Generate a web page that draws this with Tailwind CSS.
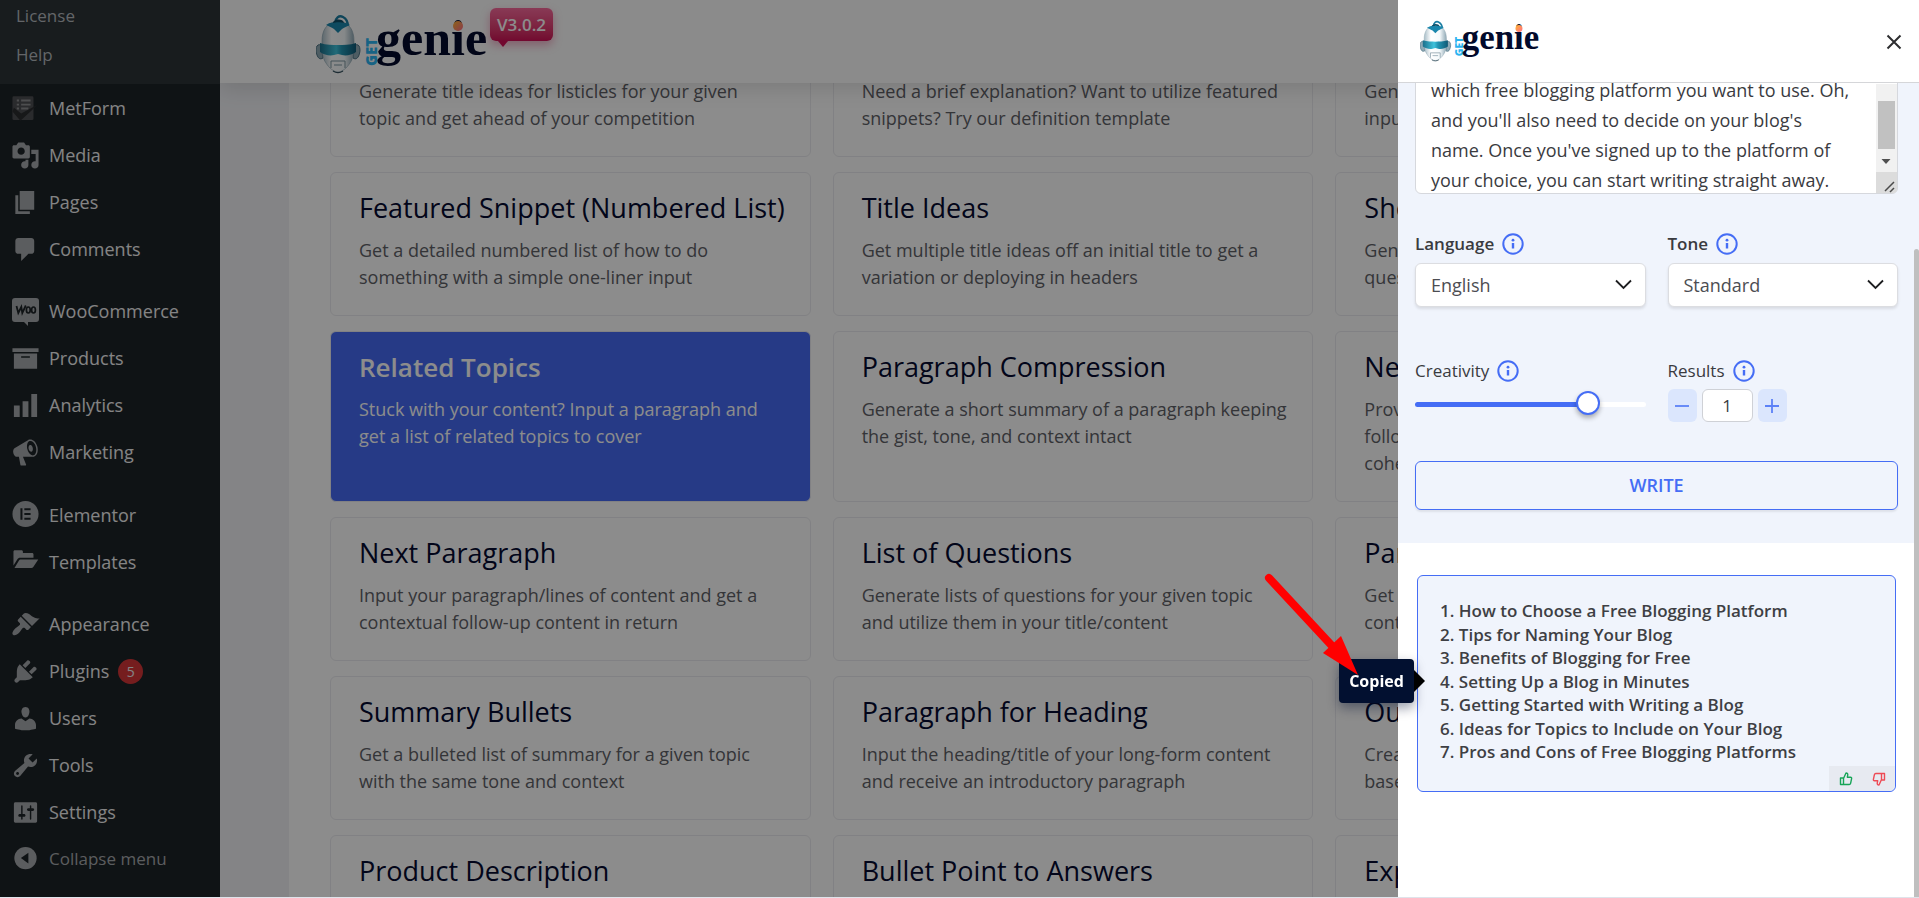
<!DOCTYPE html>
<html lang="en">
<head>
<meta charset="utf-8">
<title>GetGenie – Templates</title>
<script src="https://cdn.jsdelivr.net/npm/@tailwindcss/browser@4"></script>
</head>
<body class="h-screen overflow-hidden bg-[#f0f1f5] font-['Open_Sans','Noto_Sans',sans-serif] text-[#3c3d40]">

<svg class="absolute size-0" aria-hidden="true">
  <defs>
    <linearGradient id="steel" x1="0" x2="1" y1="0" y2="0"><stop offset="0" stop-color="#a9bec8"/><stop offset=".3" stop-color="#fff"/><stop offset=".7" stop-color="#f4f9fb"/><stop offset="1" stop-color="#8fa8b4"/></linearGradient>
    <linearGradient id="visor" x1="0" x2="1" y1="0" y2="0"><stop offset="0" stop-color="#1b6f8b"/><stop offset=".45" stop-color="#3fc3dc"/><stop offset=".6" stop-color="#2496b4"/><stop offset="1" stop-color="#0f5a76"/></linearGradient>
    <linearGradient id="spark" x1="0" x2="1" y1="0" y2="1"><stop offset="0" stop-color="#ffb52e"/><stop offset="1" stop-color="#ff6b8b"/></linearGradient>
  </defs>
  <symbol id="logo" viewBox="0 0 175 60">
    <path d="M20 9c-1-5 3-8 7-6 4 2 5 6 5 10" fill="none" stroke="#1c7ea3" stroke-width="2.500"/>
    <path d="M5 31c-5-2-6 5-4 10 1 3 3 5 6 3zM39 31c5-2 6 5 4 10-1 3-3 5-6 3z" fill="#8fa9b5" stroke="#4d7283" stroke-width="1"/>
    <path d="M22 8C10 8 6 17 6 27c0 8 0 17 4 22 3 5 8 9 12 9s9-4 12-9c4-5 4-14 4-22C38 17 34 8 22 8z" fill="url(#steel)" stroke="#8ba4b0" stroke-width=".6"/>
    <path d="M10 11c4-3 8-3 12-3s8 0 12 3c-3 1-6 3-8 4l-4 4-4-4c-2-1-5-3-8-4z" fill="#1b87ad"/>
    <path d="M17 9c0-4 10-5 11 0-3-1-8-1-11 0z" fill="#0d4d66"/>
    <path d="M4 29c6 2 13 2 18 2s12 0 18-2v9c-4 3-10 4-14 3l-4-1-4 1c-4 1-10 0-14-3z" fill="url(#visor)"/>
    <path d="M15 54v-7h14v7M18 51h8" fill="none" stroke="#7d95a0" stroke-width="1"/>
    <path d="M17 57c3 2 7 2 10 0" fill="none" stroke="#37515e" stroke-width="1.200"/>
    <text transform="translate(61 52) rotate(-90)" class="font-['Open_Sans'] text-[15px] font-extrabold" fill="#2ab4f0">GET</text>
    <text x="60" y="41" class="font-['Liberation_Serif'] text-[50px] font-bold" fill="#020a2c">genie</text>
    <circle cx="142" cy="12" r="5" fill="url(#spark)"/>
  </symbol>
  <symbol id="info" viewBox="0 0 22 22">
    <circle cx="11" cy="11" r="9.700" fill="none" stroke="#456df5" stroke-width="2"/>
    <path d="M11 10v5.500" stroke="#456df5" stroke-width="2.400"/><circle cx="11" cy="7.200" r="1.400" fill="#456df5"/>
  </symbol>
</svg>

<div class="flex h-full">

  <nav class="w-[220px] shrink-0 bg-[#1d2327] text-[18px] text-[#f0f0f1]" aria-label="Admin menu">
    <div class="flex h-[84px] flex-col bg-[#2c3338] pl-4 text-[17px] leading-[39px] text-[#b4b9be]">
      <a href="#" class="-mt-1">License</a>
      <a href="#">Help</a>
    </div>
    <ul class="pt-px">
      <li><a href="#" class="flex h-[47px] items-center gap-[9px] pl-[11px]"><svg class="size-[29px] text-[#6a6a6c]" viewBox="0 0 20 20" fill="currentColor"><path d="M2 1.500h12.500a1 1 0 0 1 1 1V17a1 1 0 0 1-1 1H2a1 1 0 0 1-1-1V2.500a1 1 0 0 1 1-1z" fill="#4e4f52"/><path d="M4 4.500h1.500M7 4.500h6.500M4 7.300h1.500M7 7.300h6.500M4 10h1.500M7 10h5" stroke="#8d8e91" stroke-width="1.300"/><path d="M2 9.500l5 4 11-6-4 4-7.500 7L1 12z" fill="#2a2c2f"/></svg>MetForm</a></li>
      <li><a href="#" class="flex h-[47px] items-center gap-[9px] pl-[11px]"><svg class="size-[29px] text-[#a7aaad]" viewBox="0 0 20 20" fill="currentColor"><path d="M13 11V4c0-.55-.45-1-1-1h-1.670L9 1H5L3.670 3H2c-.55 0-1 .45-1 1v7c0 .55.45 1 1 1h10c.55 0 1-.45 1-1zM7 4.500c1.380 0 2.500 1.120 2.500 2.500S8.380 9.500 7 9.500 4.500 8.380 4.500 7 5.620 4.500 7 4.500zM14 6h5v10.500c0 1.380-1.120 2.500-2.500 2.500S14 17.880 14 16.500s1.120-2.500 2.500-2.500c.17 0 .34.02.5.05V9h-3V6zm-4 8.050V13h2v3.500c0 1.380-1.120 2.500-2.500 2.500S7 17.880 7 16.500 8.120 14 9.500 14c.17 0 .34.02.5.05z"/></svg>Media</a></li>
      <li><a href="#" class="flex h-[47px] items-center gap-[9px] pl-[11px]"><svg class="size-[29px] text-[#a7aaad]" viewBox="0 0 20 20" fill="currentColor"><path d="M6 15V2h10v13H6zm-1 1h8v2H3V5h2v11z"/></svg>Pages</a></li>
      <li><a href="#" class="flex h-[47px] items-center gap-[9px] pl-[11px]"><svg class="size-[29px] text-[#a7aaad]" viewBox="0 0 20 20" fill="currentColor"><path d="M5 2h9c1.100 0 2 .9 2 2v7c0 1.100-.9 2-2 2h-2l-5 5v-5H5c-1.100 0-2-.9-2-2V4c0-1.100.9-2 2-2z"/></svg>Comments</a></li>
      <li class="mt-[15px]"><a href="#" class="flex h-[47px] items-center gap-[9px] pl-[11px]"><svg class="size-[29px] text-[#a7aaad]" viewBox="0 0 29 29" fill="currentColor"><path d="M4 1h21a3 3 0 0 1 3 3v18a3 3 0 0 1-3 3h-8v4l-4-4H4a3 3 0 0 1-3-3V4a3 3 0 0 1 3-3z"/><path d="M5.500 9l1.800 7 3-6 1 6 3.500-7.500" fill="none" stroke="#1d2327" stroke-width="1.800"/><ellipse cx="17.300" cy="13" rx="1.900" ry="3" fill="none" stroke="#1d2327" stroke-width="1.700"/><ellipse cx="22.500" cy="13" rx="1.900" ry="3" fill="none" stroke="#1d2327" stroke-width="1.700"/></svg>WooCommerce</a></li>
      <li><a href="#" class="flex h-[47px] items-center gap-[9px] pl-[11px]"><svg class="size-[29px] text-[#a7aaad]" viewBox="0 0 20 20" fill="currentColor"><path d="M19 3v2.500H1V3h18zM2 6.500h16V17H2V6.500zm11 3V8.500H7v1h6z"/></svg>Products</a></li>
      <li><a href="#" class="flex h-[47px] items-center gap-[9px] pl-[11px]"><svg class="size-[29px] text-[#a7aaad]" viewBox="0 0 20 20" fill="currentColor"><path d="M18 18V2h-4v16h4zm-6 0V7H8v11h4zm-6 0v-8H2v8h4z"/></svg>Analytics</a></li>
      <li><a href="#" class="flex h-[47px] items-center gap-[9px] pl-[11px]"><svg class="size-[29px] text-[#a7aaad]" viewBox="0 0 20 20" fill="currentColor" fill-rule="evenodd"><path d="M18.150 5.940c.46 1.620.38 3.220-.02 4.480-.42 1.280-1.260 2.180-2.300 2.480-.16.06-.26.06-.4.06-.06.02-.12.02-.18.02-.06.02-.14.02-.22.02h-6.800l2.220 5.500c.02.14-.06.26-.14.34-.08.1-.24.16-.34.16H6.950c-.1 0-.26-.06-.34-.16-.08-.08-.16-.2-.14-.34l-1-5.500H4.250l-.02-.02c-.5.06-1.080-.18-1.540-.62s-.88-1.080-1.060-1.880c-.24-.8-.2-1.560-.02-2.200.18-.62.58-1.080 1.060-1.300l.02-.02 9-5.400c.1-.06.18-.1.24-.16.06-.04.14-.08.24-.12.16-.08.28-.12.5-.18 1.040-.3 2.240.1 3.220.98s1.840 2.240 2.260 3.860zm-2.580 5.980h-.02c.4-.1.74-.34 1.040-.7.58-.7.86-1.760.86-3.040 0-.64-.1-1.300-.28-1.980-.34-1.360-1.020-2.500-1.780-3.240s-1.680-1.100-2.460-.88c-.82.22-1.400.96-1.700 2-.32 1.040-.28 2.360.06 3.720.38 1.360 1 2.500 1.800 3.240.78.74 1.620 1.100 2.480.88z"/><path d="M13.030 4.840c.22-.04.42-.02.62.04.38.16.76.48 1.020 1s.42 1.200.42 1.780c0 .3-.04.56-.12.8-.18.48-.44.84-.86.94-.34.1-.8-.06-1.140-.4s-.64-.86-.78-1.500c-.18-.62-.12-1.240.02-1.720s.48-.84.82-.94z"/></svg>Marketing</a></li>
      <li class="mt-4"><a href="#" class="flex h-[47px] items-center gap-[9px] pl-[11px]"><svg class="size-[29px] text-[#a7aaad]" viewBox="0 0 20 20" fill="currentColor"><circle cx="10" cy="9" r="9"/><path d="M6.500 5h1.400v8H6.500zM9.200 5h4.300v1.400H9.200zM9.200 8.300h4.300v1.400H9.200zM9.200 11.600h4.300V13H9.200z" fill="#1d2327"/></svg>Elementor</a></li>
      <li><a href="#" class="flex h-[47px] items-center gap-[9px] pl-[11px]"><svg class="size-[29px] text-[#a7aaad]" viewBox="0 0 20 20" fill="currentColor"><path d="M1.700 12V2.500c0-.6.4-1 1-1h4.500c.6 0 1 .4 1 1V3.500h6.300c.6 0 1 .4 1 1v2.300H6.300c-.9 0-1.500.4-2 1.100z"/><path d="M2.400 13.800l3-5c.3-.6.8-.9 1.400-.9h12l-3.300 5c-.4.6-.9.9-1.500.9z"/></svg>Templates</a></li>
      <li class="mt-[15px]"><a href="#" class="flex h-[47px] items-center gap-[9px] pl-[11px]"><svg class="size-[29px] text-[#a7aaad]" viewBox="0 0 20 20" fill="currentColor"><path d="M14.480 11.060L7.410 3.990l1.500-1.500c.5-.56 2.300-.47 3.510.32 1.210.8 1.430 1.280 2.910 2.100 1.180.64 2.450 1.260 4.450.85zm-.71.71L6.700 4.700 4.930 6.470c-.39.39-.39 1.020 0 1.410l1.060 1.060c.39.39.39 1.030 0 1.420-.6.6-1.430 1.110-2.210 1.690-.35.26-.7.53-1.010.84C1.430 14.230.4 16.080 1.400 17.070c.99 1 2.840-.03 4.180-1.360.31-.31.58-.66.85-1.020.57-.78 1.080-1.610 1.690-2.210.39-.39 1.020-.39 1.410 0l1.060 1.060c.39.39 1.020.39 1.410 0z"/></svg>Appearance</a></li>
      <li><a href="#" class="flex h-[47px] items-center gap-[9px] pl-[11px]"><svg class="size-[29px] text-[#a7aaad]" viewBox="0 0 20 20" fill="currentColor"><path d="M13.110 4.360L9.870 7.600 8 5.730l3.240-3.240c.35-.34 1.050-.2 1.560.32.52.51.66 1.210.31 1.550zm-8 1.770l.91-1.120 9.010 9.010-1.190.84c-.71.71-2.630 1.160-3.820 1.160H6.140L4.900 17.260c-.59.59-1.540.59-2.120 0-.59-.58-.59-1.530 0-2.120l1.240-1.240v-3.880c0-1.130.4-3.190 1.090-3.890zm7.260 3.970l3.240-3.240c.34-.35 1.040-.21 1.550.31.52.51.66 1.210.31 1.550l-3.240 3.250z"/></svg>Plugins<span class="grid size-[25px] place-items-center rounded-full bg-[#d63638] text-sm">5</span></a></li>
      <li><a href="#" class="flex h-[47px] items-center gap-[9px] pl-[11px]"><svg class="size-[29px] text-[#a7aaad]" viewBox="0 0 20 20" fill="currentColor"><path d="M10 9.250c-2.270 0-2.730-3.440-2.730-3.440C7 4.020 7.820 2 9.970 2c2.160 0 2.980 2.020 2.710 3.810 0 0-.41 3.440-2.680 3.440zm0 2.570L12.720 10c2.390 0 4.520 2.330 4.520 4.530v2.490s-3.650 1.130-7.240 1.130c-3.650 0-7.240-1.130-7.240-1.130v-2.490c0-2.250 1.940-4.480 4.470-4.480z"/></svg>Users</a></li>
      <li><a href="#" class="flex h-[47px] items-center gap-[9px] pl-[11px]"><svg class="size-[29px] text-[#a7aaad]" viewBox="0 0 20 20" fill="currentColor"><path d="M16.680 9.770c-1.340 1.340-3.300 1.670-4.950.99l-5.410 6.520c-.99.99-2.590.99-3.580 0s-.99-2.590 0-3.570l6.520-5.420c-.68-1.650-.35-3.610.99-4.950 1.280-1.280 3.120-1.620 4.720-1.060l-2.890 2.890 2.820 2.820 2.860-2.870c.53 1.580.18 3.390-1.080 4.650zM3.810 16.210c.4.39 1.040.39 1.430 0 .4-.4.4-1.040 0-1.430-.39-.4-1.030-.4-1.430 0-.39.39-.39 1.030 0 1.430z"/></svg>Tools</a></li>
      <li><a href="#" class="flex h-[47px] items-center gap-[9px] pl-[11px]"><svg class="size-[29px] text-[#a7aaad]" viewBox="0 0 20 20" fill="currentColor"><path d="M18 16V4c0-.55-.45-1-1-1H3c-.55 0-1 .45-1 1v12c0 .55.45 1 1 1h14c.55 0 1-.45 1-1zM8 11h1c.55 0 1 .45 1 1s-.45 1-1 1H8v1.500c0 .28-.22.5-.5.5s-.5-.22-.5-.5V13H6c-.55 0-1-.45-1-1s.45-1 1-1h1V5.500c0-.28.22-.5.5-.5s.5.22.5.5V11zm5-2h-1c-.55 0-1-.45-1-1s.45-1 1-1h1V5.500c0-.28.22-.5.5-.5s.5.22.5.5V7h1c.55 0 1 .45 1 1s-.45 1-1 1h-1v5.500c0 .28-.22.5-.5.5s-.5-.22-.5-.5V9z"/></svg>Settings</a></li>
      <li><button type="button" class="flex h-[46px] items-center gap-[9px] pl-[11px] text-[17px] text-[#a7aaad]"><svg class="size-[29px]" viewBox="0 0 20 20" fill="currentColor"><circle cx="10" cy="9" r="7.700"/><path d="M12 5.300v7.400L6.800 9z" fill="#1d2327"/></svg>Collapse menu</button></li>
    </ul>
  </nav>

  <main class="relative h-full min-w-0 flex-1 overflow-hidden pr-[62px] pl-[69px]">
    <header class="absolute inset-x-0 top-0 z-10 flex h-[83px] items-start bg-[#fdfdfd] pt-[14px] pl-24 shadow-[0_6px_20px_rgba(0,0,0,0.12)]">
      <svg class="h-[60px] w-[175px]" role="img" aria-label="GetGenie"><use href="#logo"/></svg>
      <span class="relative -mt-[6px] -ml-px grid h-[33px] w-[63px] place-items-center rounded-md bg-linear-to-b from-[#f9699c] to-[#cf0f57] text-[17px] leading-6 font-semibold text-white shadow-[0_4px_10px_rgba(214,20,90,0.35)]">V3.0.2
        <svg class="absolute top-[33px] left-2 h-[6px] w-[10px]" viewBox="0 0 10 6"><path d="M0 0h10L5 6z" fill="#cf0f57"/></svg>
      </span>
    </header>

    <section class="grid grid-cols-3 gap-x-[22px] gap-y-[15px] bg-white px-[41px] pt-[13px] text-[18px] leading-[27px] text-[#606167]">
      <article class="rounded-md border border-[#ececf0] px-7 pt-[18px] pb-6"><h2 class="mb-3 text-[27px] leading-[34px] font-medium text-[#050a30]">Listicle Ideas</h2><p>Generate title ideas for listicles for your given<br>topic and get ahead of your competition</p></article>
      <article class="rounded-md border border-[#ececf0] px-7 pt-[18px] pb-6"><h2 class="mb-3 text-[27px] leading-[34px] font-medium text-[#050a30]">Definition</h2><p>Need a brief explanation? Want to utilize featured<br>snippets? Try our definition template</p></article>
      <article class="rounded-md border border-[#ececf0] px-7 pt-[18px] pb-6"><h2 class="mb-3 text-[27px] leading-[34px] font-medium text-[#050a30]">Featured Snippet</h2><p>Generate a bulleted list from<br>input</p></article>

      <article class="rounded-md border border-[#ececf0] px-7 pt-[18px] pb-6"><h2 class="mb-3 text-[27px] leading-[34px] font-medium whitespace-nowrap text-[#050a30]">Featured Snippet (Numbered List)</h2><p>Get a detailed numbered list of how to do<br>something with a simple one-liner input</p></article>
      <article class="rounded-md border border-[#ececf0] px-7 pt-[18px] pb-6"><h2 class="mb-3 text-[27px] leading-[34px] font-medium text-[#050a30]">Title Ideas</h2><p>Get multiple title ideas off an initial title to get a<br>variation or deploying in headers</p></article>
      <article class="rounded-md border border-[#ececf0] px-7 pt-[18px] pb-6"><h2 class="mb-3 text-[27px] leading-[34px] font-medium text-[#050a30]">Short Answers</h2><p>Generate short answers to<br>questions</p></article>

      <article class="rounded-md border border-[#ececf0] bg-[#456bf4] px-7 pt-[18px] pb-6 text-white"><h2 class="mb-3 text-[26px] leading-[34px] font-semibold">Related Topics</h2><p>Stuck with your content? Input a paragraph and<br>get a list of related topics to cover</p></article>
      <article class="rounded-md border border-[#ececf0] px-7 pt-[18px] pb-6"><h2 class="mb-3 text-[27px] leading-[34px] font-medium text-[#050a30]">Paragraph Compression</h2><p class="whitespace-nowrap">Generate a short summary of a paragraph keeping<br>the gist, tone, and context intact</p></article>
      <article class="rounded-md border border-[#ececf0] px-7 pt-[18px] pb-6"><h2 class="mb-3 text-[27px] leading-[34px] font-medium text-[#050a30]">Next Line</h2><p>Provide a line and get the<br>following one in a<br>coherent tone</p></article>

      <article class="rounded-md border border-[#ececf0] px-7 pt-[18px] pb-6"><h2 class="mb-3 text-[27px] leading-[34px] font-medium text-[#050a30]">Next Paragraph</h2><p>Input your paragraph/lines of content and get a<br>contextual follow-up content in return</p></article>
      <article class="rounded-md border border-[#ececf0] px-7 pt-[18px] pb-6"><h2 class="mb-3 text-[27px] leading-[34px] font-medium text-[#050a30]">List of Questions</h2><p>Generate lists of questions for your given topic<br>and utilize them in your title/content</p></article>
      <article class="rounded-md border border-[#ececf0] px-7 pt-[18px] pb-6"><h2 class="mb-3 text-[27px] leading-[34px] font-medium text-[#050a30]">Paragraph</h2><p>Get a full paragraph of<br>content</p></article>

      <article class="rounded-md border border-[#ececf0] px-7 pt-[18px] pb-6"><h2 class="mb-3 text-[27px] leading-[34px] font-medium text-[#050a30]">Summary Bullets</h2><p>Get a bulleted list of summary for a given topic<br>with the same tone and context</p></article>
      <article class="rounded-md border border-[#ececf0] px-7 pt-[18px] pb-6"><h2 class="mb-3 text-[27px] leading-[34px] font-medium text-[#050a30]">Paragraph for Heading</h2><p>Input the heading/title of your long-form content<br>and receive an introductory paragraph</p></article>
      <article class="rounded-md border border-[#ececf0] px-7 pt-[18px] pb-6"><h2 class="mb-3 text-[27px] leading-[34px] font-medium text-[#050a30]">Outline</h2><p>Create an outline<br>based on a title</p></article>

      <article class="rounded-md border border-[#ececf0] px-7 pt-[18px] pb-6"><h2 class="mb-3 text-[27px] leading-[34px] font-medium text-[#050a30]">Product Description</h2></article>
      <article class="rounded-md border border-[#ececf0] px-7 pt-[18px] pb-6"><h2 class="mb-3 text-[27px] leading-[34px] font-medium text-[#050a30]">Bullet Point to Answers</h2></article>
      <article class="rounded-md border border-[#ececf0] px-7 pt-[18px] pb-6"><h2 class="mb-3 text-[27px] leading-[34px] font-medium text-[#050a30]">Expand</h2></article>
    </section>
  </main>
</div>

<div class="fixed inset-0 z-20 border-b border-[#dfe3ea] bg-black/45"></div>

<aside class="fixed top-0 right-0 bottom-px z-30 flex w-[521px] flex-col bg-white" aria-label="Template form">
  <header class="z-10 flex h-[83px] shrink-0 items-start justify-between border-b border-[#d5d6d9] bg-white pt-5 pr-4 pl-[22px]">
    <svg class="h-[42px] w-[122px]" role="img" aria-label="GetGenie"><use href="#logo"/></svg>
    <button type="button" aria-label="Close" class="mt-[13px]"><svg class="size-[18px]" viewBox="0 0 18 18"><path d="M2.500 2.500l13 13M15.500 2.500l-13 13" stroke="#2d2e30" stroke-width="2"/></svg></button>
  </header>

  <div class="relative min-h-0 flex-1 overflow-hidden">
    <form class="bg-[#f0f4fc] pr-[21px] pb-[33px] pl-[17px]">
      <div class="relative">
        <textarea id="content" aria-label="Content" class="-mt-[30px] block h-[141px] w-full resize-none overflow-hidden rounded-md border border-[#d6d8dd] bg-white px-[15px] pt-[21px] text-[18px] leading-[30px] whitespace-pre text-[#3a3b3f]">which free blogging platform you want to use. Oh,
and you'll also need to decide on your blog's
name. Once you've signed up to the platform of
your choice, you can start writing straight away.</textarea>
        <svg class="absolute right-px bottom-px h-[109px] w-[21px]" viewBox="0 0 21 109" aria-hidden="true"><path d="M0 0h21v88H0z" fill="#f1f1f1"/><path d="M2 17h17v48H2z" fill="#c1c1c1"/><path d="M5.500 75h9L10 80z" fill="#505050"/><path d="M0 88h21v17a4 4 0 0 1-4 4H0z" fill="#dcdcdc"/><path d="M9 107l9-9M14 108l4-4" stroke="#4a4a4a" stroke-width="1.500"/></svg>
      </div>

      <div class="mt-[39px] grid grid-cols-2 gap-x-[22px] text-[17px] font-semibold text-[#3a3b3f]">
        <div>
          <div class="flex h-[22px] items-center gap-2"><label for="language">Language</label><svg class="size-[22px]" aria-hidden="true"><use href="#info"/></svg></div>
          <div class="relative mt-2">
            <select id="language" class="h-[44px] w-full appearance-none rounded-md border border-[#dcdde1] bg-white px-[15px] text-[18px] font-normal text-[#4c4d52] shadow-[0_2px_3px_rgba(0,0,0,0.1)]"><option>English</option></select>
            <svg class="pointer-events-none absolute top-4 right-[14px] h-[11px] w-[17px]" viewBox="0 0 17 11"><path d="M1 1.500l7.500 7.500L16 1.500" fill="none" stroke="#1d1e20" stroke-width="1.800"/></svg>
          </div>
        </div>
        <div>
          <div class="flex h-[22px] items-center gap-2"><label for="tone">Tone</label><svg class="size-[22px]" aria-hidden="true"><use href="#info"/></svg></div>
          <div class="relative mt-2">
            <select id="tone" class="h-[44px] w-full appearance-none rounded-md border border-[#dcdde1] bg-white px-[15px] text-[18px] font-normal text-[#4c4d52] shadow-[0_2px_3px_rgba(0,0,0,0.1)]"><option>Standard</option></select>
            <svg class="pointer-events-none absolute top-4 right-[14px] h-[11px] w-[17px]" viewBox="0 0 17 11"><path d="M1 1.500l7.500 7.500L16 1.500" fill="none" stroke="#1d1e20" stroke-width="1.800"/></svg>
          </div>
        </div>
      </div>

      <div class="mt-[53px] grid grid-cols-2 gap-x-[22px] text-[17px] font-medium text-[#3a3b3f]">
        <div>
          <div class="flex h-[22px] items-center gap-2"><label for="creativity">Creativity</label><svg class="size-[22px]" aria-hidden="true"><use href="#info"/></svg></div>
          <input id="creativity" type="range" min="0" max="100" value="78" class="mt-[10px] block h-6 w-full appearance-none bg-transparent [&::-webkit-slider-runnable-track]:h-[5px] [&::-webkit-slider-runnable-track]:rounded-full [&::-webkit-slider-runnable-track]:bg-linear-to-r [&::-webkit-slider-runnable-track]:from-[#456df5] [&::-webkit-slider-runnable-track]:from-75% [&::-webkit-slider-runnable-track]:to-white [&::-webkit-slider-runnable-track]:to-75% [&::-webkit-slider-thumb]:-mt-[11px] [&::-webkit-slider-thumb]:size-6 [&::-webkit-slider-thumb]:appearance-none [&::-webkit-slider-thumb]:rounded-full [&::-webkit-slider-thumb]:border-2 [&::-webkit-slider-thumb]:border-[#456df5] [&::-webkit-slider-thumb]:bg-white [&::-webkit-slider-thumb]:shadow-[0_3px_5px_rgba(0,0,0,0.3)]">
        </div>
        <div>
          <div class="flex h-[22px] items-center gap-2"><label for="results">Results</label><svg class="size-[22px]" aria-hidden="true"><use href="#info"/></svg></div>
          <div class="mt-[7px] flex gap-[5px]">
            <button type="button" aria-label="Fewer results" class="grid h-[33px] w-[29px] place-items-center rounded-md bg-[#dbe6fd]"><svg class="size-[14px]" viewBox="0 0 14 14"><path d="M0 7h14" stroke="#5c81f7" stroke-width="1.800"/></svg></button>
            <input id="results" type="text" value="1" class="h-[33px] w-[51px] rounded-md border border-[#cfd1d6] bg-white text-center text-[17px] font-normal">
            <button type="button" aria-label="More results" class="grid h-[33px] w-[29px] place-items-center rounded-md bg-[#dbe6fd]"><svg class="size-[14px]" viewBox="0 0 14 14"><path d="M0 7h14M7 0v14" stroke="#5c81f7" stroke-width="1.800"/></svg></button>
          </div>
        </div>
      </div>

      <button type="submit" class="mt-[39px] block h-[49px] w-full rounded-md border border-[#456df5] text-[18px] font-semibold text-[#456df5] shadow-[0_2px_2px_rgba(0,0,0,0.08)]">WRITE</button>
    </form>

    <div class="relative mt-8 mr-[23px] ml-[19px] rounded-md border border-[#456df5] bg-[#f0f4fc] px-[22px] pt-[23px] pb-7">
      <ol class="flex h-[164px] list-inside list-decimal flex-col justify-between text-[17px] leading-[23px] font-semibold text-[#3e3f44]">
        <li>How to Choose a Free Blogging Platform</li>
        <li>Tips for Naming Your Blog</li>
        <li>Benefits of Blogging for Free</li>
        <li>Setting Up a Blog in Minutes</li>
        <li>Getting Started with Writing a Blog</li>
        <li>Ideas for Topics to Include on Your Blog</li>
        <li>Pros and Cons of Free Blogging Platforms</li>
      </ol>
      <div class="absolute right-0 bottom-0 flex h-[25px] w-[66px] items-center justify-around rounded-br-md bg-[#e7eaf1]">
        <button type="button" aria-label="Good result"><svg class="size-[14px]" viewBox="0 0 14 14" fill="none" stroke="#18a558" stroke-width="1.400" stroke-linejoin="round"><path d="M1.500 6h3v6.500h-3zM4.500 6.500L7 1c1.500 0 2 1 1.700 2.300L8.300 5.200h3.200c.9 0 1.300.7 1.100 1.500l-1 4.600c-.2.8-.7 1.200-1.400 1.200H4.500"/></svg></button>
        <button type="button" aria-label="Bad result"><svg class="size-[14px]" viewBox="0 0 14 14" fill="none" stroke="#ee4a55" stroke-width="1.400" stroke-linejoin="round"><path d="M12.500 8h-3V1.500h3zM9.500 7.500L7 13c-1.500 0-2-1-1.700-2.300l.4-1.900H2.500c-.9 0-1.300-.7-1.100-1.500l1-4.600c.2-.8.7-1.200 1.400-1.200h5.700"/></svg></button>
      </div>
    </div>

    <div class="absolute top-[166px] right-0 bottom-0 w-[5px] rounded-t-sm bg-[#bfbfbf]" aria-hidden="true"></div>
  </div>

  <div role="tooltip" class="absolute top-[659px] -left-[59px] z-20 grid h-[44px] w-[75px] place-items-center rounded-[4px] bg-[#021030] text-base font-bold text-white shadow-[0_5px_12px_rgba(2,16,48,0.4)]">Copied
    <svg class="absolute top-[11px] left-[75px] h-[22px] w-[11px]" viewBox="0 0 11 22"><path d="M0 0l11 11L0 22z" fill="#000"/></svg>
  </div>
  <svg class="absolute top-[570px] -left-[136px] z-30 h-[108px] w-[100px]" viewBox="0 0 100 108" aria-hidden="true"><path d="M7 8l65 70" stroke="#f00" stroke-width="8" stroke-linecap="round"/><path d="M61 83l18-17 17 39z" fill="#f00"/></svg>
</aside>
</body>
</html>
